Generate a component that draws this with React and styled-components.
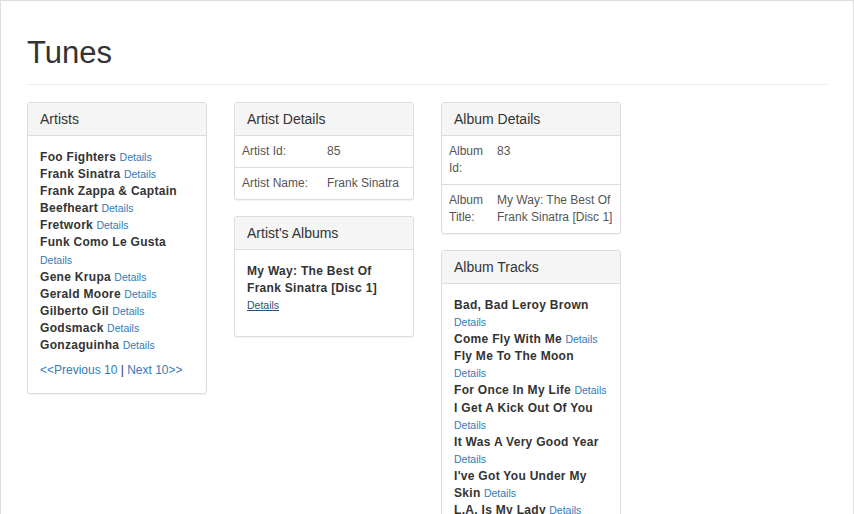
import React from 'react';
import styled, { createGlobalStyle } from 'styled-components';

const GlobalStyle = createGlobalStyle`
  html, body {
    margin: 0;
    padding: 0;
    background: #fff;
  }
  body {
    font-family: "Liberation Sans", Arial, Helvetica, sans-serif;
    font-size: 12px;
    line-height: 17px;
    color: #333;
  }
  * { box-sizing: border-box; }
`;

const artists = [
  'Foo Fighters',
  'Frank Sinatra',
  'Frank Zappa & Captain Beefheart',
  'Fretwork',
  'Funk Como Le Gusta',
  'Gene Krupa',
  'Gerald Moore',
  'Gilberto Gil',
  'Godsmack',
  'Gonzaguinha',
];

const tracks = [
  'Bad, Bad Leroy Brown',
  'Come Fly With Me',
  'Fly Me To The Moon',
  'For Once In My Life',
  'I Get A Kick Out Of You',
  'It Was A Very Good Year',
  "I've Got You Under My Skin",
  'L.A. Is My Lady',
  'My Way',
  'New York, New York',
  "Somethin' Stupid",
  'Strangers In The Night',
  'Summer Wind',
];

const App = () => {
  return (
    <>
      <GlobalStyle />
      <Page>
        <Container>
          <PageHeader>
            <Title>Tunes</Title>
          </PageHeader>
          <Columns>
            <Column>
              <Panel>
                <PanelHeading>Artists</PanelHeading>
                <PanelBody>
                  {artists.map((name) => (
                    <Item key={name}>
                      <Name>{name}</Name> <SmallLink href="#">Details</SmallLink>
                    </Item>
                  ))}
                  <Pager>
                    <a href="#">&lt;&lt;Previous 10</a> | <a href="#">Next 10&gt;&gt;</a>
                  </Pager>
                </PanelBody>
              </Panel>
            </Column>

            <Column>
              <Panel>
                <PanelHeading>Artist Details</PanelHeading>
                <InfoTable>
                  <tbody>
                    <tr>
                      <Label $width={85}>Artist Id:</Label>
                      <td>85</td>
                    </tr>
                    <tr>
                      <Label $width={85}>Artist Name:</Label>
                      <td>Frank Sinatra</td>
                    </tr>
                  </tbody>
                </InfoTable>
              </Panel>
              <Panel>
                <PanelHeading>Artist's Albums</PanelHeading>
                <PanelBody $extra={8}>
                  <Item>
                    <Name>My Way: The Best Of Frank Sinatra [Disc 1]</Name>
                    <br />
                    <SmallLink href="#" $visited>Details</SmallLink>
                  </Item>
                </PanelBody>
              </Panel>
            </Column>

            <Column>
              <Panel>
                <PanelHeading>Album Details</PanelHeading>
                <InfoTable>
                  <tbody>
                    <tr>
                      <Label $width={46}>Album Id:</Label>
                      <td>83</td>
                    </tr>
                    <tr>
                      <Label $width={46}>Album Title:</Label>
                      <td>My Way: The Best Of Frank Sinatra [Disc 1]</td>
                    </tr>
                  </tbody>
                </InfoTable>
              </Panel>
              <Panel>
                <PanelHeading>Album Tracks</PanelHeading>
                <PanelBody>
                  {tracks.map((name) => (
                    <Item key={name}>
                      <Name>{name}</Name> <SmallLink href="#">Details</SmallLink>
                    </Item>
                  ))}
                </PanelBody>
              </Panel>
            </Column>

            <Column />
          </Columns>
        </Container>
      </Page>
    </>
  );
};

export default App;

const Page = styled.div`
  min-height: 100vh;
  border: 1px solid #dedede;
`;

const Container = styled.div`
  padding: 0 25px 0 26px;
`;

const PageHeader = styled.div`
  padding: 35px 0 14px;
  border-bottom: 1px solid #eee;
  margin-bottom: 17px;
`;

const Title = styled.h1`
  margin: 0;
  font-size: 31px;
  line-height: 34px;
  font-weight: 500;
  color: #333;
`;

const Columns = styled.div`
  display: grid;
  grid-template-columns: repeat(4, 180px);
  column-gap: 27px;
  align-items: start;
`;

const Column = styled.div`
  display: flex;
  flex-direction: column;
  gap: 16px;
`;

const Panel = styled.div`
  background: #fff;
  border: 1px solid #ddd;
  border-radius: 3px;
  box-shadow: 0 1px 1px rgba(0, 0, 0, 0.05);
  overflow: hidden;
`;

const PanelHeading = styled.div`
  background: #f5f5f5;
  border-bottom: 1px solid #ddd;
  padding: 8px 12px;
  font-size: 14px;
  line-height: 16px;
  color: #333;
`;

const PanelBody = styled.div`
  padding: 13px 12px ${(p) => 14 + (p.$extra || 0)}px;
`;

const Item = styled.div`
  line-height: 17.1px;
`;

const Name = styled.b`
  font-weight: 700;
  color: #333;
  letter-spacing: 0.3px;
`;

const SmallLink = styled.a`
  font-size: 10.5px;
  color: ${(p) => (p.$visited ? '#23527c' : '#337ab7')};
  text-decoration: ${(p) => (p.$visited ? 'underline' : 'none')};
`;

const Pager = styled.div`
  margin-top: 8px;
  color: #333;

  a {
    color: #337ab7;
    text-decoration: none;
  }
`;

const InfoTable = styled.table`
  width: 100%;
  border-collapse: collapse;

  td {
    padding: 7px;
    vertical-align: top;
    line-height: 17px;
    color: #555;
  }
  tr + tr td {
    border-top: 1px solid #ddd;
  }
`;

const Label = styled.td`
  width: ${(p) => p.$width}px;
`;
